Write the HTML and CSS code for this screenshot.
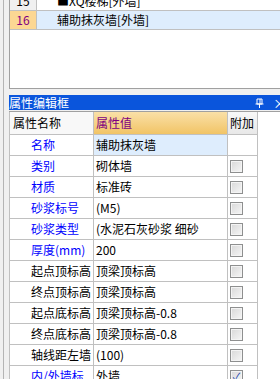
FILE: index.html
```html
<!DOCTYPE html>
<html lang="zh">
<head>
  <meta charset="UTF-8" />
  <title>属性编辑框</title>
  <link rel="stylesheet" href="styles.css">
</head>
<body>
  <div class="frame">
    <div class="side"></div>
    <div class="main">

      <!-- 构件列表 -->
      <div class="list">
        <div class="item first">
          <div class="num">15</div>
          <div class="name">■XQ楼梯[外墙]</div>
        </div>
        <div class="item current">
          <div class="num">16</div>
          <div class="name">辅助抹灰墙[外墙]</div>
        </div>
      </div>

      <div class="title">
        <span>属性编辑框</span>
        <span class="tools">
          <svg width="9" height="10" viewBox="0 0 9 10">
            <path d="M2 1h5v5H2zM0.5 6h8M4.5 6v4" fill="none" stroke="#fff" stroke-width="1"/>
            <path d="M5 1v5" stroke="#fff" stroke-width="1"/>
          </svg>
          <span class="close">×</span>
        </span>
      </div>

      <div class="props">
        <div class="row head">
          <div class="c-name">属性名称</div>
          <div class="c-val">属性值</div>
          <div class="c-add">附加</div>
        </div>
        <div class="row">
          <div class="c-name blue">名称</div>
          <div class="c-val sel">辅助抹灰墙</div>
          <div class="c-add"></div>
        </div>
        <div class="row">
          <div class="c-name blue">类别</div>
          <div class="c-val">砌体墙</div>
          <div class="c-add"><span class="box"></span></div>
        </div>
        <div class="row">
          <div class="c-name blue">材质</div>
          <div class="c-val">标准砖</div>
          <div class="c-add"><span class="box"></span></div>
        </div>
        <div class="row">
          <div class="c-name blue">砂浆标号</div>
          <div class="c-val">(M5)</div>
          <div class="c-add"><span class="box"></span></div>
        </div>
        <div class="row">
          <div class="c-name blue">砂浆类型</div>
          <div class="c-val">(水泥石灰砂浆 细砂</div>
          <div class="c-add"><span class="box"></span></div>
        </div>
        <div class="row">
          <div class="c-name blue">厚度(mm)</div>
          <div class="c-val">200</div>
          <div class="c-add"><span class="box"></span></div>
        </div>
        <div class="row">
          <div class="c-name">起点顶标高</div>
          <div class="c-val">顶梁顶标高</div>
          <div class="c-add"><span class="box"></span></div>
        </div>
        <div class="row">
          <div class="c-name">终点顶标高</div>
          <div class="c-val">顶梁顶标高</div>
          <div class="c-add"><span class="box"></span></div>
        </div>
        <div class="row">
          <div class="c-name">起点底标高</div>
          <div class="c-val">顶梁顶标高-0.8</div>
          <div class="c-add"><span class="box"></span></div>
        </div>
        <div class="row">
          <div class="c-name">终点底标高</div>
          <div class="c-val">顶梁顶标高-0.8</div>
          <div class="c-add"><span class="box"></span></div>
        </div>
        <div class="row">
          <div class="c-name">轴线距左墙</div>
          <div class="c-val">(100)</div>
          <div class="c-add"><span class="box"></span></div>
        </div>
        <div class="row">
          <div class="c-name blue">内/外墙标</div>
          <div class="c-val">外墙</div>
          <div class="c-add"><span class="box checked">✓</span></div>
        </div>
      </div>

    </div>
  </div>
</body>
</html>
```

FILE: styles.css
```css
* {
  box-sizing: border-box;
  margin: 0;
  padding: 0;
}

body {
  font-family: "Noto Sans CJK SC", "Liberation Sans", sans-serif;
  font-size: 12px;
  color: #000;
  background: #f0f0f0;
  width: 280px;
  height: 379px;
  overflow: hidden;
}

.frame {
  display: flex;
  height: 379px;
}

.side {
  width: 9px;
  flex: none;
  border-left: 3px solid #f0f0f0;
  position: relative;
}

.side::before {
  content: "";
  display: block;
  width: 1px;
  height: 100%;
  background: #b4b4b4;
}

.main {
  flex: 1;
  min-width: 0;
  display: flex;
  flex-direction: column;
}

/* top list */
.list {
  height: 89px;
  background: #fff;
  border-left: 1px solid #a0a0a0;
  border-bottom: 1px solid #a0a0a0;
  overflow: hidden;
  flex: none;
}

.item {
  display: flex;
  height: 19px;
  border-bottom: 1px solid #c0c0c0;
}

.item.first {
  margin-top: -8px;
}

.num {
  width: 27px;
  flex: none;
  text-align: center;
  line-height: 18px;
  background: #f0f0f0;
  border-right: 1px solid #c0c0c0;
}

.name {
  flex: 1;
  padding-left: 20px;
  line-height: 18px;
  white-space: nowrap;
  overflow: hidden;
}

.current .num {
  background: #fcd793;
  color: #800080;
}

.current .name {
  background: #deedfd;
}

/* title bar */
.title {
  margin-top: 6px;
  height: 15px;
  background: #0a55dc;
  color: #fff;
  display: flex;
  justify-content: space-between;
  align-items: center;
  line-height: 15px;
  white-space: nowrap;
  flex: none;
}

.tools {
  display: flex;
  align-items: center;
  gap: 9px;
  margin-right: -6px;
}

.close {
  font-size: 13px;
}

/* property grid */
.props {
  margin-top: 1px;
  flex: 1;
  background: #fff;
  border-top: 1px solid #a0a0a0;
}

.row {
  display: grid;
  grid-template-columns: 85px 134px 30px;
  height: 21px;
  line-height: 20px;
  white-space: nowrap;
}

.row > div {
  border-right: 1px solid #c0c0c0;
  border-bottom: 1px solid #c0c0c0;
  overflow: hidden;
}

.row > div:first-child {
  border-left: 1px solid #c0c0c0;
}

.row.head {
  height: 23px;
  line-height: 22px;
}

.head .c-name {
  background: #f8f8f8;
  padding-left: 3px;
}

.head .c-val {
  background: linear-gradient(#fae0a8, #f1c466);
  color: #800080;
  padding-left: 2px;
}

.head .c-add {
  background: linear-gradient(#f8f8f8, #e8e8e8);
  text-align: center;
}

.c-name {
  padding-left: 21px;
}

.c-name.blue {
  color: #0000ff;
}

.c-val {
  padding-left: 2px;
}

.c-val.sel {
  background: #deedfd;
}

.c-add {
  display: flex;
  align-items: center;
  padding-left: 2px;
}

.box {
  display: block;
  width: 13px;
  height: 13px;
  border: 1px solid #8e8f8f;
  background: linear-gradient(135deg, #d8d8d8, #f6f6f6);
  box-shadow: inset 0 0 0 1px #f4f4f4;
  font-size: 11px;
  line-height: 11px;
  text-align: center;
  color: #2244aa;
}
```
